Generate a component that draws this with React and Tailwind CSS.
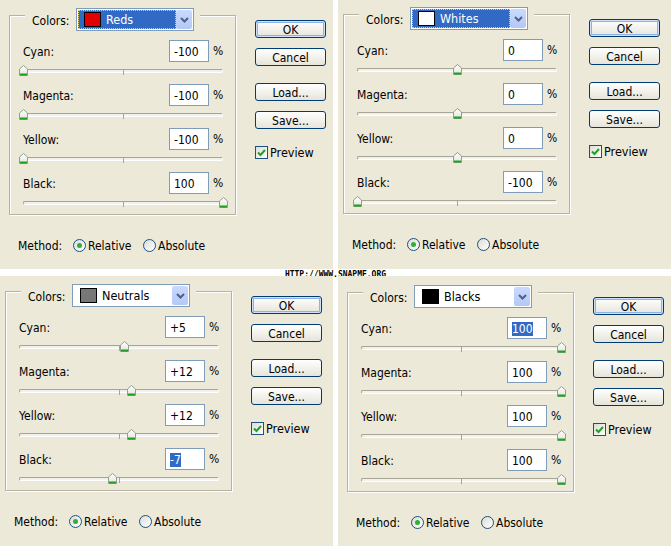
import React from "react";

const ROWS = ["Cyan:", "Magenta:", "Yellow:", "Black:"];

function Thumb() {
  return (
    <svg width="9" height="11" viewBox="0 0 9 11">
      <defs>
        <linearGradient id="thumbFill" x1="0" y1="0" x2="0" y2="1">
          <stop offset="0" stopColor="#ffffff" />
          <stop offset="1" stopColor="#e4e3dc" />
        </linearGradient>
      </defs>
      <path d="M0.5 10.5 V4 L4.5 0.5 L8.5 4 V10.5 Z" fill="url(#thumbFill)" stroke="#8ea08e" />
      <rect x="1" y="8.5" width="7" height="2" fill="#21a121" />
    </svg>
  );
}

function Slider({ value }) {
  return (
    <div className="relative h-[22px] w-[200px]">
      <div className="mt-[7px] h-[4px] w-[200px] rounded-[2px] border border-t-[#a5a497] border-l-[#a5a497] border-b-white border-r-white bg-[#f2f1ea]" />
      <div className="absolute left-[100px] top-[7px] h-[6px] w-[1px] bg-[#a5a497]" />
      <div className="absolute top-[3px]" style={{ left: value + 100 - 4 }}>
        <Thumb />
      </div>
    </div>
  );
}

function Field({ text, selected }) {
  return (
    <div className="flex h-[22px] w-[40px] items-center border border-[#7f9db9] bg-white pl-[4px] pt-[1px]">
      {selected ? (
        <span className="bg-[#316ac5] leading-[14px] text-white">{text}</span>
      ) : (
        <span>{text}</span>
      )}
    </div>
  );
}

function Chevron() {
  return (
    <svg width="9" height="6" viewBox="0 0 9 6">
      <polyline points="1,1 4.5,4.5 8,1" fill="none" stroke="#4d6185" strokeWidth="2" />
    </svg>
  );
}

function ColorSelect({ name, swatch, focused }) {
  return (
    <div className="flex h-[23px] w-[118px] items-stretch border border-[#7f9db9] bg-white p-[1px]">
      <div
        className={
          focused
            ? "flex flex-1 items-center border border-dotted border-[#e6cf7a] bg-[#316ac5] pl-[5px] text-white"
            : "flex flex-1 items-center pl-[6px] text-black"
        }
      >
        <div className="h-[15px] w-[17px] border border-black" style={{ backgroundColor: swatch }} />
        <span className="ml-[5px] pt-[1px] text-[12.5px]">{name}</span>
      </div>
      <div className="flex w-[16px] items-center justify-center rounded-[2px] bg-gradient-to-b from-[#cad9fd] to-[#b4c8f6]">
        <Chevron />
      </div>
    </div>
  );
}

function XpButton({ label, isDefault }) {
  return (
    <div
      className={
        isDefault
          ? "flex h-[18px] w-[71px] items-center justify-center rounded-[3px] border border-[#003c74] bg-gradient-to-b from-white to-[#e6e4da] pt-[1px] shadow-[inset_0_0_0_1px_#cfe0fb,inset_0_0_0_2px_#8fb1ea]"
          : "flex h-[18px] w-[71px] items-center justify-center rounded-[3px] border border-[#003c74] bg-gradient-to-b from-white to-[#e6e4da] pt-[1px]"
      }
    >
      {label}
    </div>
  );
}

function Checkbox() {
  return (
    <div className="flex h-[13px] w-[13px] items-center justify-center border border-[#1c5180] bg-gradient-to-br from-[#dcdcd7] to-white">
      <svg width="9" height="9" viewBox="0 0 9 9">
        <polyline points="1,4.5 3.5,7 8,2" fill="none" stroke="#21a121" strokeWidth="2" />
      </svg>
    </div>
  );
}

function Radio({ on }) {
  return (
    <div className="flex h-[13px] w-[13px] items-center justify-center rounded-full border border-[#1c5180] bg-gradient-to-br from-[#dcdcd7] to-white">
      {on && <div className="h-[5px] w-[5px] rounded-full bg-[#2fb02f]" />}
    </div>
  );
}

function Dialog({ pad, name, swatch, focused, values, nums, selectedRow }) {
  return (
    <div className={`flex h-full w-[333px] bg-[#ece9d8] ${pad}`}>
      <div className="flex w-[227px] flex-col">
        {/* etched group box with the Colors selector sitting on its top edge */}
        <div className="h-[200px] w-[227px] border border-[#b6b3a2] shadow-[inset_1px_1px_0_white,1px_1px_0_white]">
          <div className="-mt-[8px] ml-[15px] flex h-[23px] w-[175px] items-center bg-[#ece9d8] pl-[7px]">
            <span className="w-[44px] pt-[3px]">Colors:</span>
            <ColorSelect name={name} swatch={swatch} focused={focused} />
          </div>
          <div className="mt-[9px] flex flex-col pl-[13px]">
            {ROWS.map((label, i) => (
              <div key={label} className="flex flex-col">
                <div className="flex h-[22px] items-center">
                  <span className="w-[146px] pt-[2px]">{label}</span>
                  <Field text={values[i]} selected={selectedRow === i} />
                  <span className="ml-[4px]">%</span>
                </div>
                <Slider value={nums[i]} />
              </div>
            ))}
          </div>
        </div>
        <div className="ml-[9px] mt-[22px] flex h-[16px] items-center">
          <span className="w-[55px] pt-[1px]">Method:</span>
          <div className="flex w-[70px] items-center gap-[2px]">
            <Radio on />
            <span className="pt-[1px]">Relative</span>
          </div>
          <div className="flex items-center gap-[2px]">
            <Radio />
            <span className="pt-[1px]">Absolute</span>
          </div>
        </div>
      </div>
      <div className="ml-[19px] flex flex-col pt-[5px]">
        <XpButton label="OK" isDefault />
        <div className="mt-[10px]">
          <XpButton label="Cancel" />
        </div>
        <div className="mt-[17px]">
          <XpButton label="Load..." />
        </div>
        <div className="mt-[10px]">
          <XpButton label="Save..." />
        </div>
        <div className="mt-[14px] flex items-center gap-[2px]">
          <Checkbox />
          <span className="pt-[1px] text-[12.5px]">Preview</span>
        </div>
      </div>
    </div>
  );
}

export default function App() {
  return (
    <div className="flex h-[550px] w-[671px] flex-col bg-white font-['DejaVu_Sans_Condensed','DejaVu_Sans',sans-serif] text-[12px] font-stretch-condensed text-black">
      <div className="flex h-[269px] gap-[5px]">
        <Dialog
          pad="pl-[9px] pt-[15px]"
          name="Reds"
          swatch="#e30000"
          focused
          values={["-100", "-100", "-100", "100"]}
          nums={[-100, -100, -100, 100]}
          selectedRow={-1}
        />
        <Dialog
          pad="pl-[5px] pt-[14px]"
          name="Whites"
          swatch="#ffffff"
          focused
          values={["0", "0", "0", "-100"]}
          nums={[0, 0, 0, -100]}
          selectedRow={-1}
        />
      </div>
      <div className="flex h-[7px] justify-center">
        <span className="mt-[3px] font-['DejaVu_Sans_Mono',monospace] text-[8px] font-bold leading-[6px] font-stretch-normal">
          HTTP://WWW.SNAPME.ORG
        </span>
      </div>
      <div className="flex h-[270px] gap-[5px]">
        <Dialog
          pad="pl-[5px] pt-[15px]"
          name="Neutrals"
          swatch="#777777"
          values={["+5", "+12", "+12", "-7"]}
          nums={[5, 12, 12, -7]}
          selectedRow={3}
        />
        <Dialog
          pad="pl-[9px] pt-[16px]"
          name="Blacks"
          swatch="#000000"
          values={["100", "100", "100", "100"]}
          nums={[100, 100, 100, 100]}
          selectedRow={0}
        />
      </div>
    </div>
  );
}
